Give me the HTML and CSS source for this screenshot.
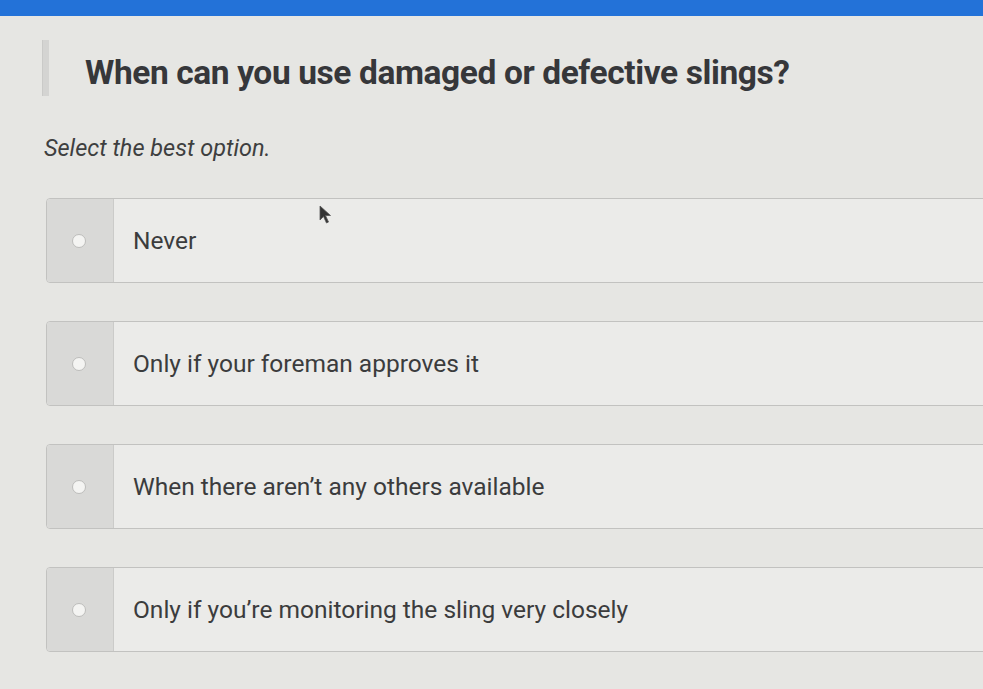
FILE: index.html
```html
<!DOCTYPE html>
<html lang="en">
<head>
    <meta charset="UTF-8">
    <meta name="viewport" content="width=device-width, initial-scale=1.0">
    <title>Sling Safety Quiz</title>
    <link rel="stylesheet" href="styles.css">
</head>
<body>
    <div class="top-bar"></div>

    <div class="quiz">
        <div class="question">
            <span class="question-mark"></span>
            <h1>When can you use damaged or defective slings?</h1>
        </div>

        <p class="hint">Select the best option.</p>

        <div class="options">
            <label class="option">
                <span class="option-radio"><span class="dot"></span></span>
                <span class="option-text">Never</span>
            </label>
            <label class="option">
                <span class="option-radio"><span class="dot"></span></span>
                <span class="option-text">Only if your foreman approves it</span>
            </label>
            <label class="option">
                <span class="option-radio"><span class="dot"></span></span>
                <span class="option-text">When there aren’t any others available</span>
            </label>
            <label class="option">
                <span class="option-radio"><span class="dot"></span></span>
                <span class="option-text">Only if you’re monitoring the sling very closely</span>
            </label>
        </div>
    </div>

    <!-- mouse pointer hovering over the first answer -->
    <svg class="pointer" width="14" height="20" viewBox="0 0 14 20">
        <path d="M1 1 L1 15 L4.5 11.5 L7.5 18 L9.5 17 L6.5 10.5 L11.5 10.5 Z" fill="#333" stroke="#555" stroke-width="0.8" stroke-linejoin="round"/>
    </svg>
</body>
</html>
```

FILE: styles.css
```css
body {
    margin: 0;
    background: #e6e6e3;
    font-family: Roboto, "Liberation Sans", sans-serif;
    color: #3a3b3c;
    overflow: hidden;
    height: 689px;
    position: relative;
}
.top-bar {
    height: 16px;
    background: #2372d8;
}
.quiz {
    padding: 24px 0 0 42px;
}
.question {
    display: flex;
    align-items: flex-start;
    gap: 36px;
}
.question-mark {
    width: 6px;
    height: 56px;
    background: #d4d4d2;
    border-left: 1px solid #cacac8;
    flex: none;
}
.question h1 {
    margin: 13px 0 0;
    font-size: 33.5px;
    line-height: 40px;
    font-weight: 700;
    letter-spacing: -0.4px;
    color: #36373a;
}
.hint {
    margin: 37px 0 0 2px;
    font-size: 23.5px;
    line-height: 30px;
    font-style: italic;
    color: #3e3f40;
}
.options {
    display: flex;
    flex-direction: column;
    gap: 38px;
    margin: 35px -12px 0 4px;
}
.option {
    display: flex;
    height: 83px;
    background: #ebebe9;
    border: 1px solid #c2c2c0;
    border-radius: 4px;
    cursor: pointer;
}
.option-radio {
    width: 66px;
    flex: none;
    display: flex;
    align-items: center;
    justify-content: center;
    background: #d9d9d7;
    border-right: 1px solid #cbcbc9;
    border-radius: 4px 0 0 4px;
}
.dot {
    width: 12px;
    height: 12px;
    margin-right: 3px;
    border-radius: 50%;
    background: #f4f4f2;
    border: 1px solid #bdbdbb;
}
.option-text {
    display: flex;
    align-items: center;
    padding-left: 19px;
    font-size: 24.5px;
    color: #3b3c3d;
}
.pointer {
    position: absolute;
    left: 319px;
    top: 205px;
}
```
